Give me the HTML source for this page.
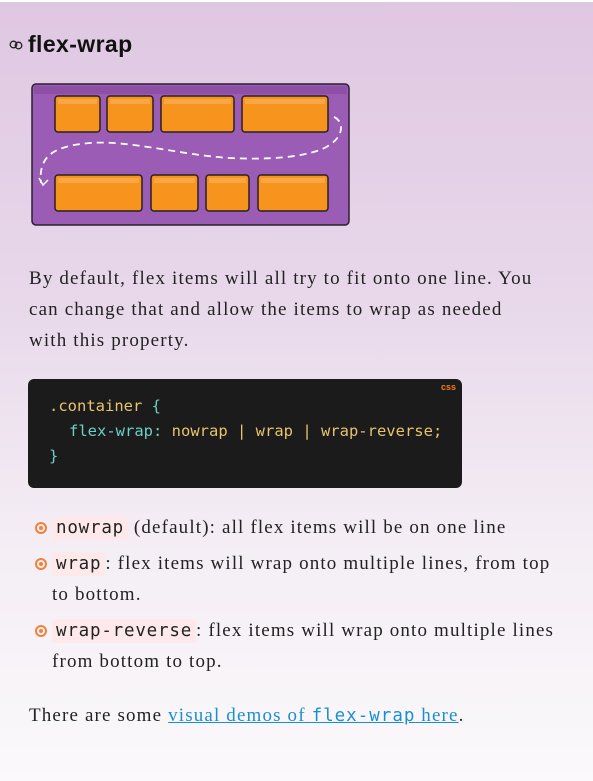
<!DOCTYPE html>
<html><head><meta charset="utf-8"><style>
html,body{margin:0;padding:0;}
body{width:593px;height:781px;overflow:hidden;position:relative;background:linear-gradient(#dfc7e2 0px,#e8d8ea 300px,#f3ecf4 520px,#fbf9fb 781px);font-family:"Liberation Serif",serif;color:#222;}
.top{position:absolute;left:0;top:0;width:593px;height:2px;background:#fff;}
.l{position:absolute;white-space:nowrap;font-size:19px;line-height:22px;letter-spacing:1.15px;}
h2{position:absolute;left:28px;top:31px;margin:0;font-family:"Liberation Sans",sans-serif;font-weight:bold;font-size:23px;color:#111;letter-spacing:0.4px;}
.code{position:absolute;left:28px;top:379px;width:434px;height:109px;background:#1b1b1b;border-radius:6px;font-family:"DejaVu Sans Mono","Liberation Mono",monospace;font-size:15.5px;}
.code div{position:absolute;white-space:nowrap;}
.y{color:#e8c36c}.c{color:#6cd0c2}
.ic{font-family:"DejaVu Sans Mono","Liberation Mono",monospace;font-size:17.5px;letter-spacing:0.8px;background:#fde9ea;padding:2px 4px;border-radius:3px;color:#222;}
.b{position:absolute;left:35px;width:8px;height:8px;border:2px solid #f3813a;border-radius:50%;}
.b::after{content:"";position:absolute;left:2px;top:2px;width:4px;height:4px;background:#f3813a;border-radius:50%;}
a{color:#1a8fd0;text-decoration:underline;}
</style></head><body>
<div class="top"></div>
<svg style="position:absolute;left:9px;top:40px" width="14" height="10" viewBox="0 0 14 10"><circle cx="4.5" cy="4.5" r="3.3" fill="none" stroke="#222" stroke-width="1.3"/><circle cx="9.5" cy="5.5" r="3.3" fill="none" stroke="#222" stroke-width="1.3"/></svg>
<h2>flex-wrap</h2>
<svg style="position:absolute;left:30px;top:82px" width="322" height="148" viewBox="30 82 322 148">
<rect x="32" y="84" width="317" height="141" rx="4" fill="#9b5cb5" stroke="#2b2030" stroke-width="1.5"/>
<rect x="34" y="86" width="313" height="8" fill="#85489e" opacity="0.6"/>
<g fill="#f7941d" stroke="#2a2020" stroke-width="1.5">
<rect x="55" y="96" width="45" height="36" rx="3"/><rect x="107" y="96" width="46" height="36" rx="3"/><rect x="161" y="96" width="73" height="36" rx="3"/><rect x="242" y="96" width="86" height="36" rx="3"/>
<rect x="55" y="175" width="87" height="36" rx="3"/><rect x="151" y="175" width="47" height="36" rx="3"/><rect x="206" y="175" width="43" height="36" rx="3"/><rect x="258" y="175" width="70" height="36" rx="3"/>
</g>
<g fill="#fbb057" opacity="0.7"><rect x="58" y="99" width="39" height="5"/><rect x="110" y="99" width="40" height="5"/><rect x="164" y="99" width="67" height="5"/><rect x="245" y="99" width="80" height="5"/><rect x="58" y="178" width="81" height="5"/><rect x="154" y="178" width="41" height="5"/><rect x="209" y="178" width="37" height="5"/><rect x="261" y="178" width="64" height="5"/></g>
<path d="M334 117 C345 122 345 140 320 150 C300 157 270 160 230 158 C180 155 130 140 90 143 C55 146 38 155 41 183" fill="none" stroke="#fff" stroke-width="1.8" stroke-dasharray="7 5"/>
<path d="M39 178 L43 185 L48 180" fill="none" stroke="#fff" stroke-width="1.5"/>
</svg>
<div class="l" style="left:29px;top:268px">By default, flex items will all try to fit onto one line. You</div>
<div class="l" style="left:29px;top:299px">can change that and allow the items to wrap as needed</div>
<div class="l" style="left:29px;top:330px">with this property.</div>
<div class="code">
<div style="right:6px;top:3px;font-family:'Liberation Sans',sans-serif;font-size:9px;font-weight:bold;color:#f07c1e">css</div>
<div style="left:21px;top:18px"><span class="y">.container</span> <span class="c">{</span></div>
<div style="left:41px;top:43px"><span class="c">flex-wrap:</span> <span class="y">nowrap | wrap | wrap-reverse;</span></div>
<div style="left:21px;top:68px"><span class="c">}</span></div>
</div>
<div class="b" style="top:522px"></div>
<div class="l" style="left:52px;top:517px"><span class="ic">nowrap</span> (default): all flex items will be on one line</div>
<div class="b" style="top:558px"></div>
<div class="l" style="left:52px;top:553px"><span class="ic">wrap</span>: flex items will wrap onto multiple lines, from top</div>
<div class="l" style="left:52px;top:584px">to bottom.</div>
<div class="b" style="top:625px"></div>
<div class="l" style="left:52px;top:620px"><span class="ic">wrap-reverse</span>: flex items will wrap onto multiple lines</div>
<div class="l" style="left:52px;top:651px">from bottom to top.</div>
<div class="l" style="left:29px;top:705px">There are some <a>visual demos of <span style="font-family:'DejaVu Sans Mono',monospace;font-size:17.5px;letter-spacing:1px">flex-wrap</span> here</a>.</div>
</body></html>
